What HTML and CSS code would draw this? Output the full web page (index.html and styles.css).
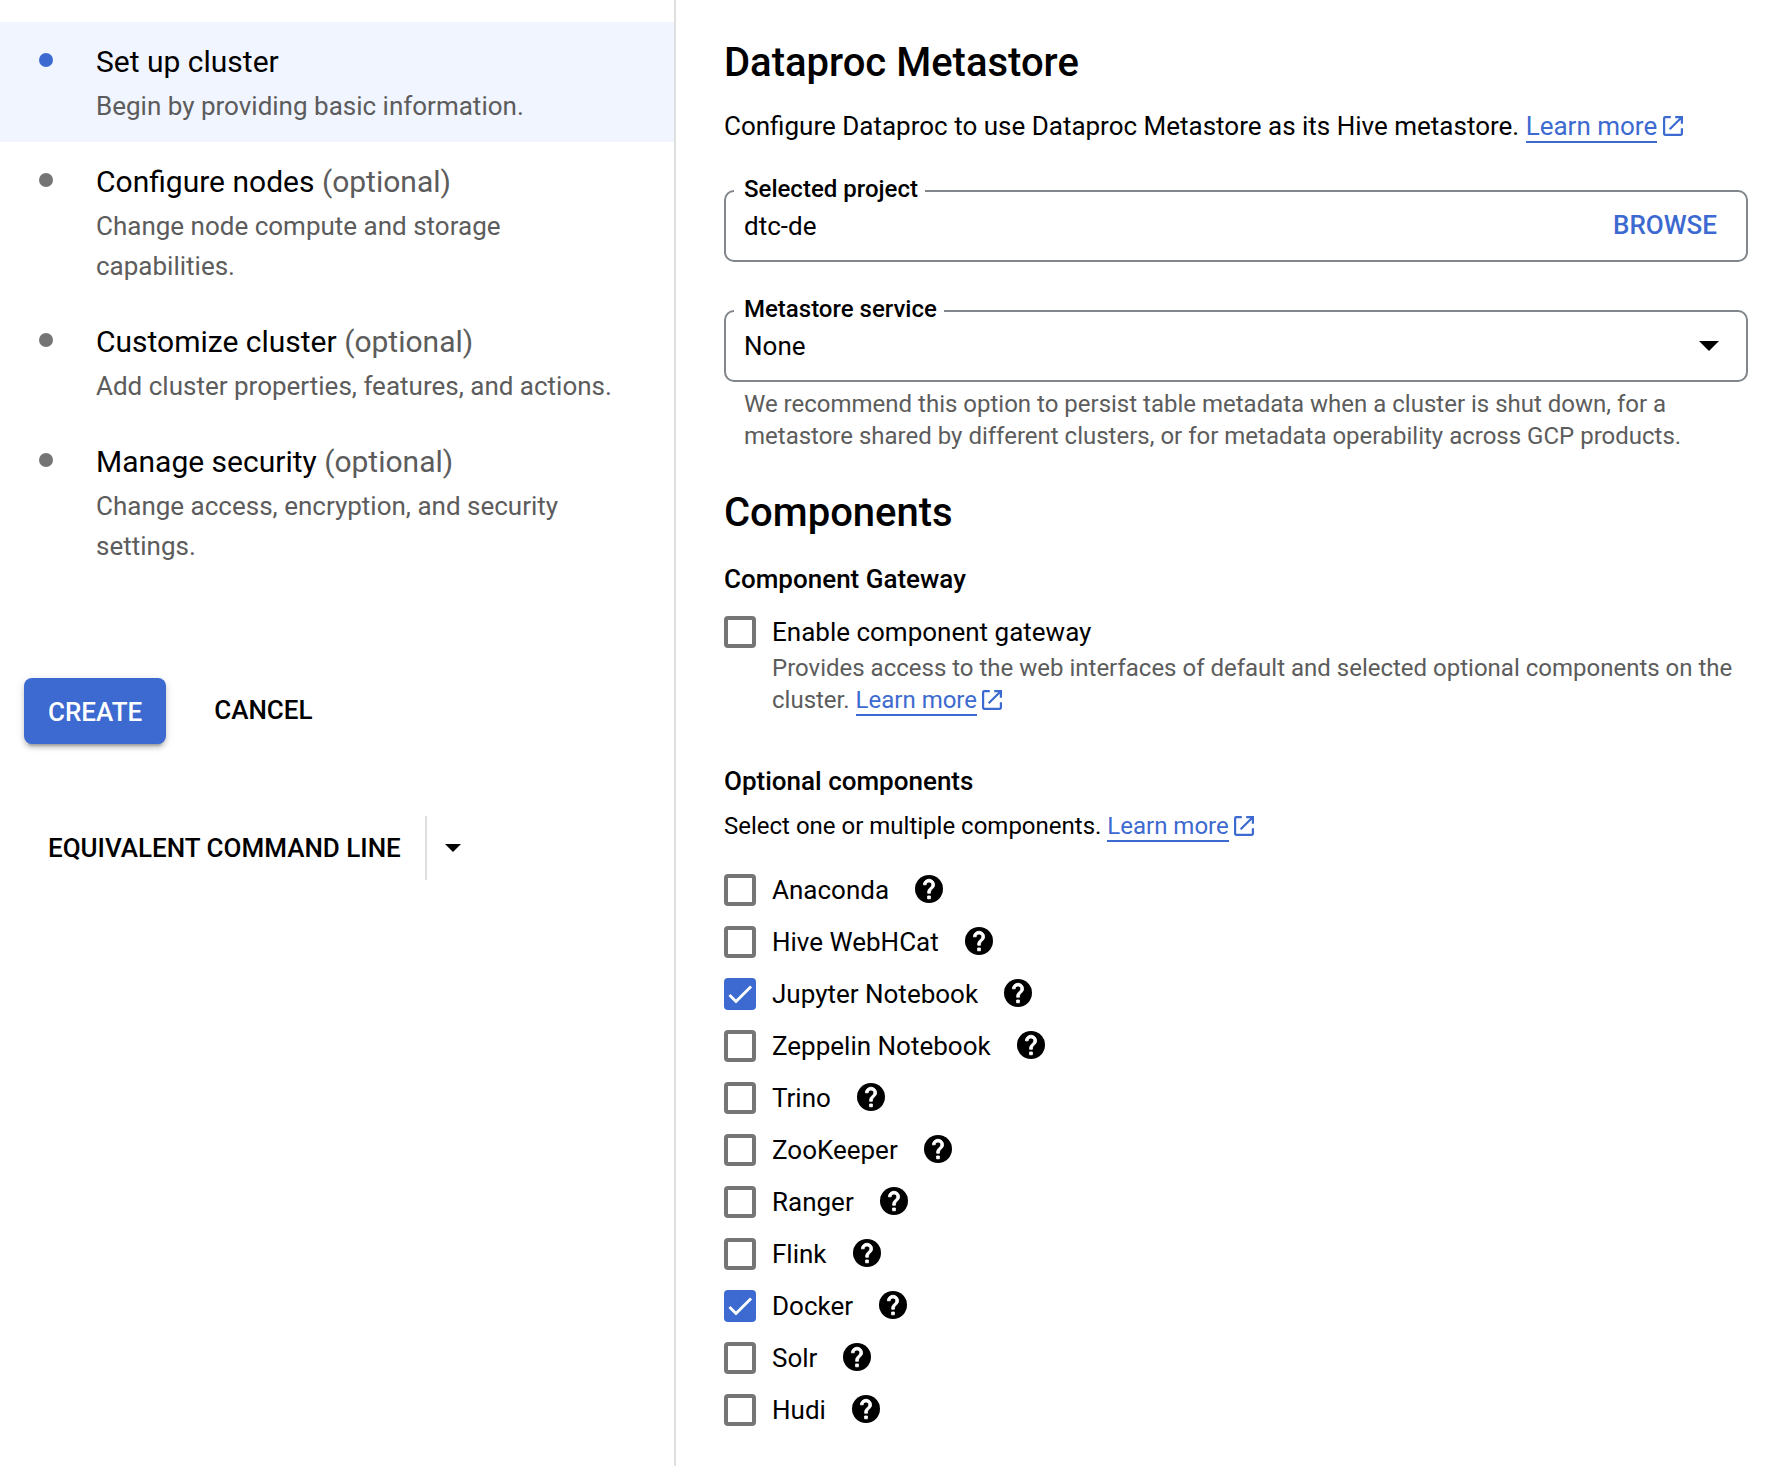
FILE: index.html
```
<!DOCTYPE html>
<html lang="en">
<head>
<meta charset="utf-8">
<title>Create a Dataproc cluster</title>
<link rel="stylesheet" href="styles.css">
</head>
<body>
<svg class="defs" width="0" height="0" aria-hidden="true">
  <symbol id="open" viewBox="3 3 18 18"><path d="M19 19H5V5h5V3H5a2 2 0 0 0-2 2v14c0 1.100.9 2 2 2h14c1.100 0 2-.9 2-2v-5h-2v5zM14 3v2h3.590l-9.300 9.300 1.410 1.410L19 6.410V10h2V3h-7z"/></symbol>
  <symbol id="help" viewBox="2 2 20 20"><circle cx="12" cy="12" r="10"/><path d="M13 19h-2v-2h2v2zm2.070-7.750l-.9.920C13.450 12.900 13 13.500 13 15h-2v-.5c0-1.100.45-2.100 1.170-2.830l1.240-1.260c.37-.36.59-.86.59-1.410 0-1.100-.9-2-2-2s-2 .9-2 2H8c0-2.210 1.790-4 4-4s4 1.790 4 4c0 .88-.36 1.680-.93 2.250z" fill="#fff" stroke="#fff" stroke-width=".6" stroke-linejoin="round"/></symbol>
  <symbol id="check" viewBox="0 0 24 24"><path d="M4.100 12.700 9 17.600 20.300 6.300" fill="none" stroke="#fff" stroke-width="2.130"/></symbol>
  <symbol id="arrow" viewBox="0 0 20 10"><path d="M0 0h20L10 10z"/></symbol>
</svg>
<div class="page">
  <aside class="sidebar">
    <ol class="steps">
      <li class="step active"><span class="dot"></span><div><h3>Set up cluster</h3><p>Begin by providing basic information.</p></div></li>
      <li class="step"><span class="dot"></span><div><h3>Configure nodes <span>(optional)</span></h3><p>Change node compute and storage capabilities.</p></div></li>
      <li class="step"><span class="dot"></span><div><h3>Customize cluster <span>(optional)</span></h3><p>Add cluster properties, features, and actions.</p></div></li>
      <li class="step"><span class="dot"></span><div><h3>Manage security <span>(optional)</span></h3><p>Change access, encryption, and security settings.</p></div></li>
    </ol>
    <div class="actions">
      <button class="btn primary">CREATE</button>
      <button class="btn cancel">CANCEL</button>
    </div>
    <div class="command">
      <button class="btn">EQUIVALENT COMMAND LINE</button>
      <button class="btn more" aria-label="More"><svg class="arrow-small"><use href="#arrow"/></svg></button>
    </div>
  </aside>
  <main class="content">
    <h1>Dataproc Metastore</h1>
    <p class="intro">Configure Dataproc to use Dataproc Metastore as its Hive metastore. <a href="#">Learn more</a><svg class="open"><use href="#open"/></svg></p>
    <div class="field project">
      <span class="label">Selected project</span>
      <span>dtc-de</span>
      <button class="btn browse">BROWSE</button>
    </div>
    <div class="field service">
      <span class="label">Metastore service</span>
      <span>None</span>
      <svg class="arrow"><use href="#arrow"/></svg>
    </div>
    <p class="hint">We recommend this option to persist table metadata when a cluster is shut down, for a metastore shared by different clusters, or for metadata operability across GCP products.</p>
    <h1 class="components">Components</h1>
    <h2>Component Gateway</h2>
    <div class="option gateway"><span class="box"></span><div><span>Enable component gateway</span>
      <p>Provides access to the web interfaces of default and selected optional components on the <span>cluster. </span><a href="#">Learn more</a><svg class="open"><use href="#open"/></svg></p></div></div>
    <h2 class="optional">Optional components</h2>
    <p class="select">Select one or multiple components. <a href="#">Learn more</a><svg class="open"><use href="#open"/></svg></p>
    <div class="options">
      <div class="option"><span class="box"></span><span>Anaconda</span><svg class="help"><use href="#help"/></svg></div>
      <div class="option"><span class="box"></span><span>Hive WebHCat</span><svg class="help"><use href="#help"/></svg></div>
      <div class="option"><span class="box checked"><svg><use href="#check"/></svg></span><span>Jupyter Notebook</span><svg class="help"><use href="#help"/></svg></div>
      <div class="option"><span class="box"></span><span>Zeppelin Notebook</span><svg class="help"><use href="#help"/></svg></div>
      <div class="option"><span class="box"></span><span>Trino</span><svg class="help"><use href="#help"/></svg></div>
      <div class="option"><span class="box"></span><span>ZooKeeper</span><svg class="help"><use href="#help"/></svg></div>
      <div class="option"><span class="box"></span><span>Ranger</span><svg class="help"><use href="#help"/></svg></div>
      <div class="option"><span class="box"></span><span>Flink</span><svg class="help"><use href="#help"/></svg></div>
      <div class="option"><span class="box checked"><svg><use href="#check"/></svg></span><span>Docker</span><svg class="help"><use href="#help"/></svg></div>
      <div class="option"><span class="box"></span><span>Solr</span><svg class="help"><use href="#help"/></svg></div>
      <div class="option"><span class="box"></span><span>Hudi</span><svg class="help"><use href="#help"/></svg></div>
    </div>
  </main>
</div>
</body>
</html>
```
FILE: styles.css
```
* { box-sizing: border-box; }
body { margin: 0; background: #fff; color: #000; font: 400 26px/40px Roboto, sans-serif; }
h1, h2, h3, p, ol { margin: 0; padding: 0; }
svg { display: block; flex: none; }
.defs { position: absolute; }
.page { display: flex; height: 1466px; overflow: hidden; }

.sidebar { width: 676px; flex: none; padding-top: 22px; border-right: 2px solid #dfdfdf; }
.steps { list-style: none; }
.step { display: flex; padding: 16px 56px 16px 39px; }
.step.active { background: #f0f5ff; }
.dot { width: 14px; height: 14px; flex: none; margin: 15px 43px 0 0; border-radius: 50%; background: #757575; }
.active .dot { background: #3c6ad0; }
h3 { font-weight: 400; font-size: 30px; line-height: 48px; }
h3 span, .step p { color: #5c5c5c; }

.btn { margin: 0; padding: 0; border: 0; background: none; color: #000; font: 500 26px/30px Roboto, sans-serif; }
.actions { display: flex; gap: 48px; margin: 96px 0 0 24px; }
.primary { height: 66px; padding: 2px 24px 0; border-radius: 8px; background: #3c6ad0; color: #fff; box-shadow: 0 6px 2px -4px rgba(0,0,0,.2), 0 4px 4px rgba(0,0,0,.14), 0 2px 10px rgba(0,0,0,.12); }
.cancel { height: 64px; }
.command { display: flex; height: 64px; margin: 72px 0 0 48px; }
.more { margin-left: 24px; padding-left: 18px; border-left: 2px solid #dfdfdf; }
.arrow-small { width: 16px; height: 8px; }

.content { flex: 1; padding: 38px 38px 0 48px; }
h1 { padding-top: 1px; font-weight: 500; font-size: 40px; line-height: 47px; }
h2 { font-weight: 500; font-size: 26px; line-height: 40px; }
a { color: #3c6ad0; text-decoration: none; border-bottom: 2px solid #3c6ad0; }
.open { display: inline-block; width: 20px; height: 20px; margin-left: 6px; vertical-align: -1px; fill: #3c6ad0; }
.intro { margin-top: 20px; }
.gateway .open, .select .open { margin-left: 5px; vertical-align: -2px; }

.field { position: relative; display: flex; align-items: center; justify-content: space-between; height: 72px; padding: 0 27px 0 18px; border: 2px solid #80868b; border-radius: 10px; }
.label { position: absolute; top: -17px; left: 8px; padding: 0 7px 0 10px; background: #fff; font-weight: 500; font-size: 24px; line-height: 28px; }
.project { margin-top: 44px; }
.service { margin-top: 48px; }
.browse { margin-right: 2px; padding-bottom: 2px; color: #3c6ad0; }
.arrow { width: 20px; height: 10px; }
.hint { margin: 6px 0 0 20px; color: #5c5c5c; font-size: 24px; line-height: 32px; }

.components { margin-top: 36px; }
.components + h2 { margin-top: 23px; }
.option { display: flex; height: 32px; line-height: 32px; }
.gateway { height: 100px; margin-top: 17px; }
.gateway p { margin-top: 4px; color: #5c5c5c; font-size: 24px; }
.box { width: 32px; height: 32px; flex: none; margin-right: 16px; border: 4px solid #757575; border-radius: 4px; }
.checked { border: 0; background: #3c6ad0; }
.checked svg { width: 32px; height: 32px; }
.optional { margin-top: 45px; }
.select { margin-top: 9px; font-size: 24px; line-height: 32px; }
.options { display: flex; flex-direction: column; gap: 20px; margin-top: 32px; }
.help { width: 28px; height: 28px; margin: 1px 0 0 26px; }
```
